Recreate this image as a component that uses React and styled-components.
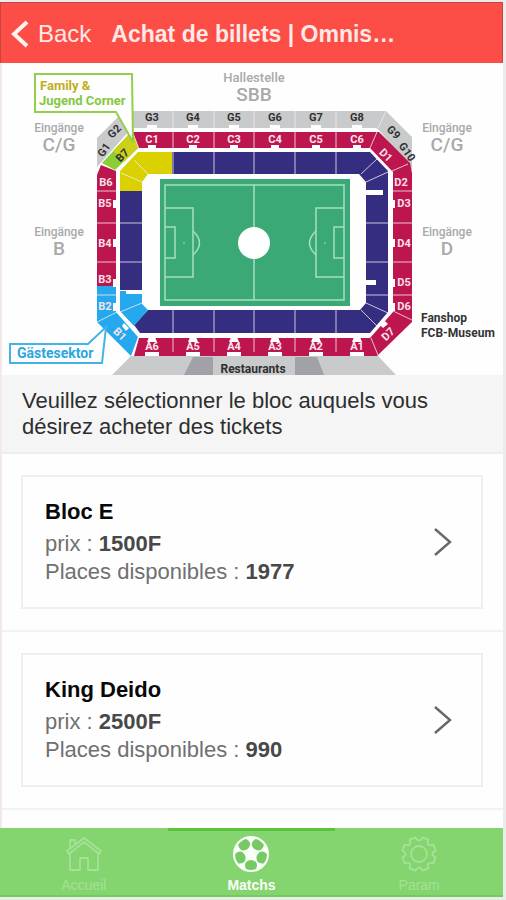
import React from "react";
import styled, { createGlobalStyle } from "styled-components";

const GlobalStyle = createGlobalStyle`
  * { box-sizing: border-box; }
  body { margin: 0; background: #ececec; font-family: "Liberation Sans", Arial, sans-serif; }
  button { font: inherit; border: 0; margin: 0; cursor: pointer; }
`;

const Screen = styled.div`
  display: flex;
  flex-direction: column;
  min-height: 100vh;
  padding: 2px 3px 3px 0;
`;

const Header = styled.header`
  display: flex;
  align-items: center;
  gap: 20px;
  height: 61px;
  padding: 2px 12px 0 10px;
  background: #fc4e46;
  border: 1px solid #c9443f;
  border-bottom: 0;
  color: #ffe9e6;
`;

const BackButton = styled.button`
  display: flex;
  align-items: center;
  gap: 9px;
  padding: 0;
  background: none;
  color: inherit;
  font-size: 24px;
`;

const Title = styled.h1`
  margin: 0;
  font-size: 23px;
  font-weight: 700;
  white-space: nowrap;
`;

const Content = styled.main`
  display: flex;
  flex-direction: column;
  flex: 1;
  background: #fefefe;
  border-left: 2px solid #f3e9eb;
`;

const MapArea = styled.div`
  svg { display: block; width: 100%; height: auto; }
`;

const Prompt = styled.p`
  margin: 0;
  padding: 13px 20px 12px;
  background: #f5f5f5;
  border-bottom: 2px solid #ededed;
  color: #2e2e2e;
  font-size: 22px;
  line-height: 26px;
`;

const List = styled.ul`
  margin: 0;
  padding: 0;
  list-style: none;
`;

const Item = styled.li`
  padding: 21px 20px 21px 19px;
  border-bottom: 2px solid #f2f2f2;
`;

const Card = styled.button`
  display: flex;
  align-items: center;
  justify-content: space-between;
  width: 100%;
  padding: 20px 29px 21px 22px;
  background: #fefefe;
  border: 2px solid #efefef;
  text-align: left;
`;

const CardText = styled.span`
  display: flex;
  flex-direction: column;
`;

const BlockName = styled.strong`
  margin-bottom: 3px;
  color: #080808;
  font-size: 22px;
  line-height: 30px;
`;

const Detail = styled.span`
  color: #707070;
  font-size: 22px;
  line-height: 28px;
  strong { color: #484848; }
`;

const TabBar = styled.nav`
  display: grid;
  grid-template-columns: repeat(3, 1fr);
  background: #84d56f;
  border-bottom: 2px solid #73cb5e;
`;

const Tab = styled.button`
  display: flex;
  flex-direction: column;
  align-items: center;
  gap: 4px;
  height: 67px;
  padding: 4px 0 0;
  background: none;
  border-top: 3px solid ${(p) => (p.$active ? "#5cc33d" : "transparent")};
  color: ${(p) => (p.$active ? "#fbfff9" : "#a5e196")};
  font-size: 14px;
  font-weight: ${(p) => (p.$active ? 700 : 400)};
  line-height: 16px;
`;

const NAVY = "#342d80";
const RED = "#bd164f";
const GREY = "#c9cacc";
const BLUE = "#25a9ee";
const YELLOW = "#dbd000";

const COLUMNS = [152, 193, 234, 275, 316, 357];
const DIVIDERS = [173, 214, 254, 295, 336];

const SIDE_LABELS = [
  ["B6", 106, 186, 0], ["B5", 105, 207, 0], ["B4", 105, 247, 0], ["B3", 105, 283, 0],
  ["B2", 105, 310, 0], ["B1", 120, 338, 45],
  ["D1", 386, 159, 45], ["D2", 401, 186, 0], ["D3", 404, 207, 0], ["D4", 404, 247, 0],
  ["D5", 404, 286, 0], ["D6", 404, 310, 0], ["D7", 388, 338, -45],
];

function SeatMap() {
  return (
    <svg viewBox="2 63 501 312" role="img" aria-label="Plan du stade" fontFamily="Roboto, sans-serif">
      <g fill={GREY}>
        <path d="M133 111H386L412 137V170L379 130 376 128H133Z" />
        <path d="M97 138 120 115 130 130 97 167Z" />
        <path d="M131 356H378L396 375H112Z" />
      </g>
      <path d="M193 357H213V375H184ZM295 357H317L324 375H295Z" fill="#a1a2a8" />

      <g fill={RED}>
        <path d="M133 132H379L410 163 412 173V322L377 356H134L139 338H370L393 312V172L370 148H139Z" />
        <path d="M101 165 116 171V286H97V175Z" />
      </g>
      <path d="M115 170 138 148 132 131 102 163Z" fill="#8bcf34" />
      <path d="M124 162 138 148 132 131 113 151Z" fill="#cbd019" />
      <path d="M97 286H116V312L138 337 131 356 97 322Z" fill={BLUE} />

      <g fill={NAVY}>
        <path d="M172 152H370L388 171V312L370 333H140L134 325 148 310H360L366 303V182L359 174H172Z" />
        <path d="M120 191H142V290H120Z" />
      </g>
      <path d="M120 291H126V294H142V304L148 310 134 326 120 311Z" fill={BLUE} />
      <path d="M138 152H172V174H148L142 182V191H120V171Z" fill={YELLOW} />
      <path d="M366 190H383V195H366ZM366 280H376V285H366Z" fill="#fefefe" />

      <g stroke="#f3edf3" strokeWidth="1" fill="none" opacity="0.8">
        {DIVIDERS.map((x) => (
          <path key={x} d={`M${x} 111V128M${x} 132V148M${x} 152V174M${x} 310V333M${x} 338V352`} />
        ))}
        <path d="M386 111 378 128M377 132 370 148M392 171 408 164M393 191H412M393 223H412M393 262H412M393 295H412M393 311 412 320M371 338 378 355" />
        <path d="M97 191H116M97 223H116M97 262H116M97 295H116M97 322 117 312" />
        <path d="M361 174 377 159M366 182 388 172M366 223H388M366 262H388M366 295H388M366 303 388 313M361 310 377 326" />
        <path d="M134 160 148 174M121 173 142 182M120 223H142M120 262H142M120 312 142 303" />
      </g>

      <g fill="#fefefe">
        {COLUMNS.map((x) => (
          <path key={x} d={`M${x - 5} 128V125H${x + 5}V128ZM${x - 4} 148V145H${x + 4}V148ZM${x - 3} 337H${x + 3}L${x + 5} 342H${x - 5}ZM${x - 7} 352H${x + 7}V356H${x - 7}Z`} />
        ))}
        <path d="M113 200h4v8h-4ZM113 239h4v8h-4ZM113 279h4v8h-4ZM113 303h4v8h-4ZM392 200h3v8h-3ZM392 239h3v8h-3ZM392 279h3v8h-3ZM392 303h3v8h-3ZM124 323l5 5-3 3-4-5ZM380 325l5-4 3 3-5 4Z" />
      </g>

      <g fontSize="11" fontWeight="700" textAnchor="middle">
        {COLUMNS.map((x, i) => (
          <g key={x}>
            <text x={x} y="121" fill="#303030">{`G${i + 3}`}</text>
            <text x={x} y="143" fill="#fbe6ed">{`C${i + 1}`}</text>
            <text x={x} y="350" fill="#fbe6ed">{`A${6 - i}`}</text>
          </g>
        ))}
        {SIDE_LABELS.map(([label, x, y, angle]) => (
          <text key={label} x={x} y={y} fill="#f9e1ea" transform={`rotate(${angle} ${x} ${y - 4})`}>{label}</text>
        ))}
        <g fill="#303030">
          <text transform="translate(107 152) rotate(-55)">G1</text>
          <text transform="translate(117 134) rotate(-45)">G2</text>
          <text transform="translate(125 158) rotate(-45)">B7</text>
          <text transform="translate(391 135) rotate(45)">G9</text>
          <text transform="translate(404 154) rotate(55)">G10</text>
        </g>
      </g>

      <path d="M160 179H350V306H160Z" fill="#3aa975" />
      <g fill="none" stroke="#a5e0c2" strokeWidth="1.5">
        <path d="M165 185H344V300H165ZM254 185V300M165 208H193V277H165M165 227H175V258H165M344 208H316V277H344M344 227H334V258H344" />
        <path d="M193 231Q206 243 193 255M316 231Q303 243 316 255" />
      </g>
      <circle cx="254" cy="243" r="16" fill="#fff" />
      <path d="M183 243h2M324 243h2" stroke="#a5e0c2" />

      <path d="M35 74H132L133 142 116 112H35Z" fill="#fefefe" stroke="#92cf4b" strokeWidth="2" />
      <path d="M10 344H88L106 327 102 363H10Z" fill="#fefefe" stroke="#43b4e8" strokeWidth="2" />

      <g fontWeight="700">
        <text x="40" y="90" fontSize="13" fill="#c0ae22">Family &amp;</text>
        <text x="39" y="105" fontSize="13" fill="#83c83e">Jugend Corner</text>
        <text x="17" y="358" fontSize="14" fill="#2aa7df">Gästesektor</text>
        <text x="421" y="322" fontSize="12" fill="#343434">Fanshop</text>
        <text x="421" y="337" fontSize="12" fill="#343434">FCB-Museum</text>
        <text x="253" y="373" fontSize="12" fill="#303030" textAnchor="middle">Restaurants</text>
      </g>
      <g fill="#a9a9a9" textAnchor="middle" fontWeight="500">
        <text x="254" y="82" fontSize="13">Hallestelle</text>
        <text x="254" y="101" fontSize="19">SBB</text>
        <text x="59" y="132" fontSize="12">Eingänge</text>
        <text x="59" y="151" fontSize="19">C/G</text>
        <text x="59" y="236" fontSize="12">Eingänge</text>
        <text x="59" y="255" fontSize="19">B</text>
        <text x="447" y="132" fontSize="12">Eingänge</text>
        <text x="447" y="151" fontSize="19">C/G</text>
        <text x="447" y="236" fontSize="12">Eingänge</text>
        <text x="447" y="255" fontSize="19">D</text>
      </g>
    </svg>
  );
}

function BackIcon() {
  return (
    <svg width="18" height="28" viewBox="0 0 18 28" fill="none" stroke="#fff5f3" strokeWidth="4" aria-hidden="true">
      <path d="M16 2 3 14 16 26" />
    </svg>
  );
}

function ChevronIcon() {
  return (
    <svg width="18" height="30" viewBox="0 0 18 30" fill="none" stroke="#686868" strokeWidth="2.4" aria-hidden="true">
      <path d="M1 2 16 15 1 28" />
    </svg>
  );
}

function HomeIcon() {
  return (
    <svg width="38" height="38" viewBox="0 0 38 38" fill="none" stroke="currentColor" strokeWidth="1.8" strokeLinejoin="round" aria-hidden="true">
      <path d="M5 18V35H15V23H23V35H33V18" />
      <path d="M2 16 19 3 36 16 34 19 19 7 4 19ZM5 13V5H10V9" />
    </svg>
  );
}

const BALL_PATCHES = [36, 108, 180, 252, 324];

function BallIcon() {
  return (
    <svg width="38" height="38" viewBox="0 0 38 38" aria-hidden="true">
      <circle cx="19" cy="19" r="18" fill="#fbfff9" />
      <g fill="#76c964">
        {BALL_PATCHES.map((angle) => (
          <path key={angle} transform={`rotate(${angle} 19 19)`} d="M14 4Q19 2 24 4Q26 8 24 11Q19 15 14 11Q12 8 14 4Z" />
        ))}
      </g>
    </svg>
  );
}

const gearOutline = Array.from({ length: 8 }, (_, i) => {
  const point = (degrees, radius) => {
    const a = ((i * 45 + degrees) * Math.PI) / 180;
    return `${(19 + radius * Math.cos(a)).toFixed(1)} ${(19 + radius * Math.sin(a)).toFixed(1)}`;
  };
  return `${i ? "L" : "M"}${point(12, 17)}L${point(33, 17)}Q${point(45, 10)} ${point(57, 17)}`;
}).join("") + "Z";

function GearIcon() {
  return (
    <svg width="38" height="38" viewBox="0 0 38 38" fill="none" stroke="currentColor" strokeWidth="1.8" strokeLinejoin="round" aria-hidden="true">
      <path d={gearOutline} />
      <circle cx="19" cy="19" r="8" />
    </svg>
  );
}

const BLOCKS = [
  { name: "Bloc E", price: "1500F", seats: 1977 },
  { name: "King Deido", price: "2500F", seats: 990 },
];

const TABS = [
  { label: "Accueil", Icon: HomeIcon },
  { label: "Matchs", Icon: BallIcon, active: true },
  { label: "Param", Icon: GearIcon },
];

export default function App() {
  return (
    <>
      <GlobalStyle />
      <Screen>
        <Header>
          <BackButton type="button"><BackIcon />Back</BackButton>
          <Title>Achat de billets | Omnis…</Title>
        </Header>
        <Content>
          <MapArea><SeatMap /></MapArea>
          <Prompt>Veuillez sélectionner le bloc auquels vous désirez acheter des tickets</Prompt>
          <List>
            {BLOCKS.map((block) => (
              <Item key={block.name}>
                <Card type="button">
                  <CardText>
                    <BlockName>{block.name}</BlockName>
                    <Detail>prix : <strong>{block.price}</strong></Detail>
                    <Detail>Places disponibles : <strong>{block.seats}</strong></Detail>
                  </CardText>
                  <ChevronIcon />
                </Card>
              </Item>
            ))}
          </List>
        </Content>
        <TabBar>
          {TABS.map(({ label, Icon, active }) => (
            <Tab key={label} type="button" $active={active} aria-current={active ? "page" : undefined}>
              <Icon />
              {label}
            </Tab>
          ))}
        </TabBar>
      </Screen>
    </>
  );
}
